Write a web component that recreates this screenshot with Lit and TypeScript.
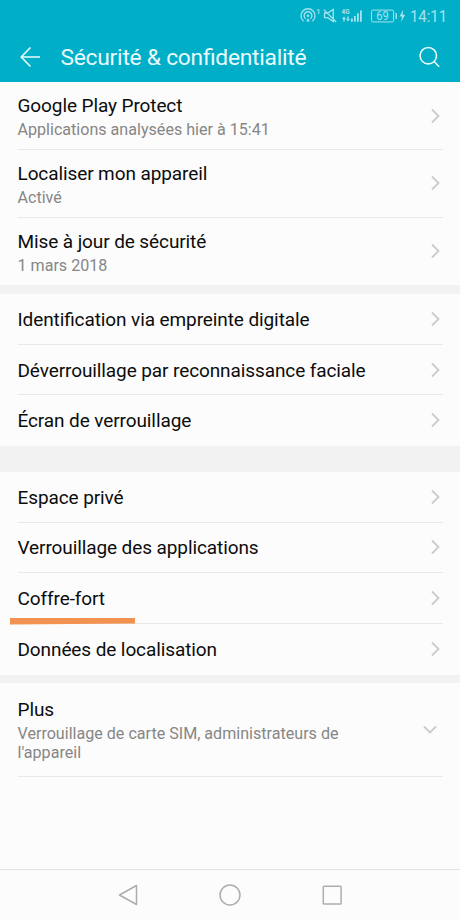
import { LitElement, html, css } from "lit";
import { customElement, property } from "lit/decorators.js";
import { classMap } from "lit/directives/class-map.js";

@customElement("status-bar")
class StatusBar extends LitElement {
  static styles = css`
    :host { display: block; height: 32px; color: #a5e3ee; }
    .bar { display: flex; justify-content: flex-end; height: 32px; }
    svg { display: block; }
    text { font-family: Roboto, sans-serif; fill: currentColor; }
    .clock { font-size: 16.8px; }
    .charge { font-size: 12px; }
    .net { font-size: 8px; font-weight: 700; }
    .one { font-size: 8px; font-weight: 500; }
  `;
  render() {
    return html`<div class="bar">
      <svg width="164" height="32" viewBox="296 0 164 32" fill="none" stroke="currentColor" stroke-width="1.3">
        <path d="M303.6 21.2a7 7 0 1 1 8.8 0M305.6 18.7a3.9 3.9 0 1 1 4.8 0" />
        <circle cx="308" cy="15.8" r="1.2" fill="currentColor" stroke="none" />
        <path d="M306.2 21.5l1.8-3.5 1.8 3.5z" fill="currentColor" stroke="none" />
        <path d="M324.5 13h3.2l5.6-3.6v12.2l-5.6-3.9h-3.2zM323.8 9.6l12.4 12.4" />
        <g fill="currentColor" stroke="none">
          <text class="one" x="316" y="14">1</text>
          <text class="net" x="341.6" y="14.4" textLength="8" lengthAdjust="spacingAndGlyphs">4G</text>
          <path d="M342 19l2-2.4 2 2.4h-1.3v2.6h-1.4V19zM346 19.2l2 2.4 2-2.4h-1.3v-2.6h-1.4v2.6z" />
          <path d="M351 18.4h1.8v3.4H351zM354 16h1.8v5.8H354zM357 13.3h1.8v8.5H357zM360 10.6h1.8v11.2H360z" />
          <path d="M395.5 13h1.4v6h-1.4zM403.3 9.5l-3.7 7h2.4l-.8 5.5 3.9-7.2h-2.5z" />
        </g>
        <rect x="371.6" y="10.1" width="22" height="11.8" rx="1.2" stroke-width="1" />
        <text class="charge" x="376.2" y="20.3" stroke="none" textLength="12.4" lengthAdjust="spacingAndGlyphs">69</text>
        <text class="clock" x="410" y="21.7" stroke="none" textLength="37" lengthAdjust="spacingAndGlyphs">14:11</text>
      </svg>
    </div>`;
  }
}

@customElement("setting-row")
class SettingRow extends LitElement {
  @property() label = "";
  @property() detail = "";
  @property({ type: Boolean }) expandable = false;
  @property({ type: Boolean }) marked = false;
  static styles = css`
    :host { display: block; position: relative; box-sizing: border-box; }
    .row { height: 100%; box-sizing: border-box; margin: 0 17.5px; display: flex; align-items: center; justify-content: space-between; border-bottom: 1px solid var(--line, #e8e8e8); }
    .label { font-size: 19px; letter-spacing: -0.1px; font-feature-settings: "liga" 1; line-height: 24px; color: #0c0c0c; white-space: nowrap; }
    .detail { font-size: 16.1px; line-height: 19px; margin-top: 2px; color: #868686; width: 350px; }
    .texts { padding-top: 2px; }
    .expandable .texts { padding-top: 0.5px; }
    svg { display: block; fill: none; stroke: #cbcbcb; stroke-width: 1.8; margin-right: 2.5px; }
    .expandable svg { margin: 0 6px 1px 0; }
    .mark { position: absolute; left: 10px; bottom: -0.5px; width: 125px; height: 7px; background: #f19250; z-index: 1; clip-path: polygon(0 8%, 100% 0, 100% 86%, 0 100%); }
  `;
  render() {
    return html`<div class=${classMap({ row: true, expandable: this.expandable })}>
        <div class="texts">
          <div class="label">${this.label}</div>
          ${this.detail ? html`<div class="detail">${this.detail}</div>` : ""}
        </div>
        ${this.expandable
          ? html`<svg width="14" height="9" viewBox="0 0 14 9"><path d="M1 1.5l6 6 6-6" /></svg>`
          : html`<svg width="9" height="16" viewBox="0 0 9 16"><path d="M1 1.5l6.5 6.5L1 14.5" /></svg>`}
      </div>
      ${this.marked ? html`<div class="mark"></div>` : ""}`;
  }
}

@customElement("app-root")
class AppRoot extends LitElement {
  static styles = css`
    :host { display: flex; flex-direction: column; width: 460px; height: 920px; background: #fcfcfc; font-family: Roboto, sans-serif; overflow: hidden; }
    .top { background: #00aec7; height: 82.4px; flex: none; }
    .bar { display: flex; align-items: center; height: 50px; padding: 0 20px; }
    .bar svg { fill: none; stroke: #e9fbfd; stroke-width: 1.6; flex: none; }
    .title { font-size: 22.8px; letter-spacing: -0.25px; font-feature-settings: "liga" 1; line-height: 28px; color: #e9fbfd; margin: 0 auto 0 19.5px; padding-top: 1px; white-space: nowrap; }
    .double { height: 67.7px; }
    .single { height: 50.75px; }
    .more { height: 93.5px; }
    .last { --line: transparent; }
    .gap { background: #f2f2f2; height: 8.5px; }
    .gap.wide { height: 25.6px; }
    .nav { margin-top: auto; height: 50px; border-top: 1px solid #e3e3e3; display: flex; justify-content: center; align-items: center; gap: 78px; }
    .nav svg { fill: none; stroke: #adadad; stroke-width: 1.5; stroke-linejoin: round; }
  `;
  render() {
    return html`
      <header class="top">
        <status-bar></status-bar>
        <div class="bar">
          <svg width="21" height="22" viewBox="0 0 21 22"><path d="M20 11H1.2M10.5 1.5L1.2 11l9.3 9.5" /></svg>
          <div class="title">Sécurité &amp; confidentialité</div>
          <svg width="21" height="22" viewBox="0 0 21 22"><circle cx="9.3" cy="9.7" r="8.2" /><path d="M15 15.5l5.2 5.3" /></svg>
        </div>
      </header>
      <setting-row class="double" label="Google Play Protect" detail="Applications analysées hier à 15:41"></setting-row>
      <setting-row class="double" label="Localiser mon appareil" detail="Activé"></setting-row>
      <setting-row class="double last" label="Mise à jour de sécurité" detail="1 mars 2018"></setting-row>
      <div class="gap"></div>
      <setting-row class="single" label="Identification via empreinte digitale"></setting-row>
      <setting-row class="single" label="Déverrouillage par reconnaissance faciale"></setting-row>
      <setting-row class="single last" label="Écran de verrouillage"></setting-row>
      <div class="gap wide"></div>
      <setting-row class="single" label="Espace privé"></setting-row>
      <setting-row class="single" label="Verrouillage des applications"></setting-row>
      <setting-row class="single" label="Coffre-fort" marked></setting-row>
      <setting-row class="single last" label="Données de localisation"></setting-row>
      <div class="gap"></div>
      <setting-row class="more" label="Plus" detail="Verrouillage de carte SIM, administrateurs de l'appareil" expandable></setting-row>
      <nav class="nav">
        <svg width="24" height="24" viewBox="0 0 24 24"><path d="M20.5 2.5v19L3.5 12z" /></svg>
        <svg width="24" height="24" viewBox="0 0 24 24"><circle cx="12" cy="12" r="10" /></svg>
        <svg width="24" height="24" viewBox="0 0 24 24"><rect x="3.3" y="3.3" width="17.8" height="17.8" rx=".8" /></svg>
      </nav>
    `;
  }
}
